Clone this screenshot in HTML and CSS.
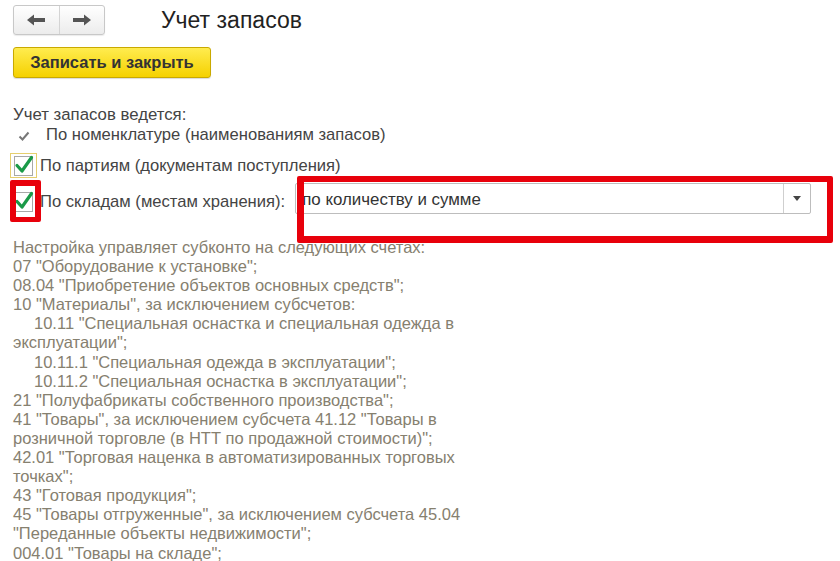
FILE: index.html
```html
<!DOCTYPE html>
<html lang="ru">
<head>
<meta charset="utf-8">
<title>Учет запасов</title>
<link rel="stylesheet" href="styles.css">
</head>
<body>
<div class="page">
  <header class="topbar">
    <div class="nav-group">
      <span class="nav-btn">
        <svg width="20" height="12" viewBox="0 0 20 12"><path d="M1 6 L8 0.5 L8 4 L19 4 L19 8 L8 8 L8 11.5 Z" fill="#555"/></svg>
      </span>
      <span class="nav-btn">
        <svg width="20" height="12" viewBox="0 0 20 12"><path d="M19 6 L12 0.5 L12 4 L1 4 L1 8 L12 8 L12 11.5 Z" fill="#555"/></svg>
      </span>
    </div>
    <h1 class="title">Учет запасов</h1>
  </header>

  <div class="toolbar">
    <button class="btn-primary">Записать и закрыть</button>
  </div>

  <div class="section-label">Учет запасов ведется:</div>

  <div class="row static-row">
    <svg class="static-check" width="12" height="10" viewBox="0 0 12 10"><path d="M1.5 5.5 L4.5 8.5 L10.5 1.5" fill="none" stroke="#777" stroke-width="2"/></svg>
    <span class="label">По номенклатуре (наименованиям запасов)</span>
  </div>

  <div class="row cb-row cb-row-first">
    <span class="cb-wrap focused">
      <span class="cb">
        <svg width="20" height="20" viewBox="0 0 20 20"><path d="M3 10.5 L8 16 L17.5 2.5" fill="none" stroke="#1a9a48" stroke-width="3.2" stroke-linecap="round" stroke-linejoin="round"/></svg>
      </span>
    </span>
    <span class="label">По партиям (документам поступления)</span>
  </div>

  <div class="row cb-row cb-row-second">
    <span class="cb-wrap">
      <span class="cb">
        <svg width="20" height="20" viewBox="0 0 20 20"><path d="M3 10.5 L8 16 L17.5 2.5" fill="none" stroke="#1a9a48" stroke-width="3.2" stroke-linecap="round" stroke-linejoin="round"/></svg>
      </span>
    </span>
    <span class="label">По складам (местам хранения):</span>
    <div class="combo">
      <span class="combo-value">по количеству и сумме</span>
      <span class="combo-btn"><svg width="8" height="5" viewBox="0 0 8 5"><path d="M0 0 L8 0 L4 5 Z" fill="#444"/></svg></span>
    </div>
  </div>

  <div class="note">
    <div>Настройка управляет субконто на следующих счетах:</div>
    <div>07 "Оборудование к установке";</div>
    <div>08.04 "Приобретение объектов основных средств";</div>
    <div>10 "Материалы", за исключением субсчетов:</div>
    <div class="indent">10.11 "Специальная оснастка и специальная одежда в</div>
    <div>эксплуатации";</div>
    <div class="indent">10.11.1 "Специальная одежда в эксплуатации";</div>
    <div class="indent">10.11.2 "Специальная оснастка в эксплуатации";</div>
    <div>21 "Полуфабрикаты собственного производства";</div>
    <div>41 "Товары", за исключением субсчета 41.12 "Товары в</div>
    <div>розничной торговле (в НТТ по продажной стоимости)";</div>
    <div>42.01 "Торговая наценка в автоматизированных торговых</div>
    <div>точках";</div>
    <div>43 "Готовая продукция";</div>
    <div>45 "Товары отгруженные", за исключением субсчета 45.04</div>
    <div>"Переданные объекты недвижимости";</div>
    <div>004.01 "Товары на складе";</div>
  </div>

  <div class="mark mark-cb"></div>
  <div class="mark mark-combo"></div>
</div>
</body>
</html>
```

FILE: styles.css
```css
html, body {
  margin: 0;
  padding: 0;
  background: #fff;
}
body {
  font-family: "Liberation Sans", Arial, sans-serif;
  color: #404040;
  overflow: hidden;
}
.page {
  position: relative;
  width: 840px;
  height: 561px;
  padding: 5px 0 0 13px;
  box-sizing: border-box;
}
.topbar {
  display: flex;
  align-items: flex-start;
  height: 42px;
}
.nav-group {
  display: flex;
  width: 92px;
  height: 30px;
  box-sizing: border-box;
  border: 1px solid #c8c8c8;
  border-radius: 3px;
  background: linear-gradient(#ffffff, #ececec);
  box-shadow: 0 1px 1px rgba(0,0,0,0.08);
}
.nav-btn {
  flex: 1;
  display: flex;
  align-items: center;
  justify-content: center;
}
.nav-btn + .nav-btn {
  border-left: 1px solid #d4d4d4;
}
.title {
  margin: 0 0 0 56px;
  font-weight: normal;
  font-size: 23px;
  line-height: 30px;
  color: #222;
}
.toolbar {
  height: 59px;
}
.btn-primary {
  display: block;
  width: 198px;
  height: 31px;
  border: 1px solid #c9a900;
  border-radius: 3px;
  background: linear-gradient(#ffec4f, #f5d100);
  font-family: "Liberation Sans", Arial, sans-serif;
  font-weight: bold;
  font-size: 16.5px;
  color: #333;
  padding: 0;
  box-shadow: 0 1px 1px rgba(0,0,0,0.15);
}
.section-label {
  font-size: 16.8px;
  line-height: 18px;
  height: 18px;
  color: #444;
}
.row {
  display: flex;
  align-items: center;
  font-size: 16.6px;
}
.static-row {
  height: 18px;
  margin-top: 2px;
}
.static-check {
  margin: 1px 0 0 5px;
}
.static-row .label {
  margin-left: 16px;
}
.label {
  color: #444;
  white-space: nowrap;
}
.cb-wrap {
  display: flex;
  align-items: center;
  justify-content: center;
  width: 27px;
  height: 25px;
  box-sizing: border-box;
  margin-left: -3px;
  border: 1px solid transparent;
  margin-right: 3px;
}
.cb-wrap.focused {
  border-color: #e6cf6e;
}
.cb {
  position: relative;
  width: 19px;
  height: 20px;
  box-sizing: border-box;
  border: 1px solid #a8a8a8;
  background: #fff;
}
.cb svg {
  position: absolute;
  left: -1px;
  top: -2px;
}
.cb-row-first {
  margin-top: 9px;
  height: 25px;
}
.cb-row-second {
  margin-top: 5px;
  height: 31px;
}
.cb-row-second .cb-wrap {
  margin-top: 7px;
}
.cb-row-second .label {
  margin-top: 7px;
}
.combo {
  display: flex;
  align-items: center;
  margin-left: 10px;
  width: 516px;
  height: 31px;
  box-sizing: border-box;
  border: 1px solid #bdbdbd;
  border-radius: 2px;
  background: #fff;
}
.combo-value {
  flex: 1;
  padding-left: 6px;
  padding-top: 2px;
  color: #333;
  font-size: 16.9px;
}
.combo-btn {
  width: 26px;
  height: 100%;
  border-left: 1px solid #cfcfcf;
  display: flex;
  align-items: center;
  justify-content: center;
}
.note {
  margin-top: 24px;
  font-size: 16.5px;
  line-height: 19.1px;
  color: #86806f;
}
.indent {
  padding-left: 21px;
}
.mark {
  position: absolute;
  border: 6px solid #e8000b;
  border-radius: 2px;
  box-sizing: border-box;
}
.mark-cb {
  left: 10px;
  top: 180px;
  width: 31px;
  height: 42px;
  border-width: 6px 6px 5px 6px;
}
.mark-combo {
  left: 297px;
  top: 176px;
  width: 536px;
  height: 67px;
  border-width: 6px 6px 7px 7px;
}
```
